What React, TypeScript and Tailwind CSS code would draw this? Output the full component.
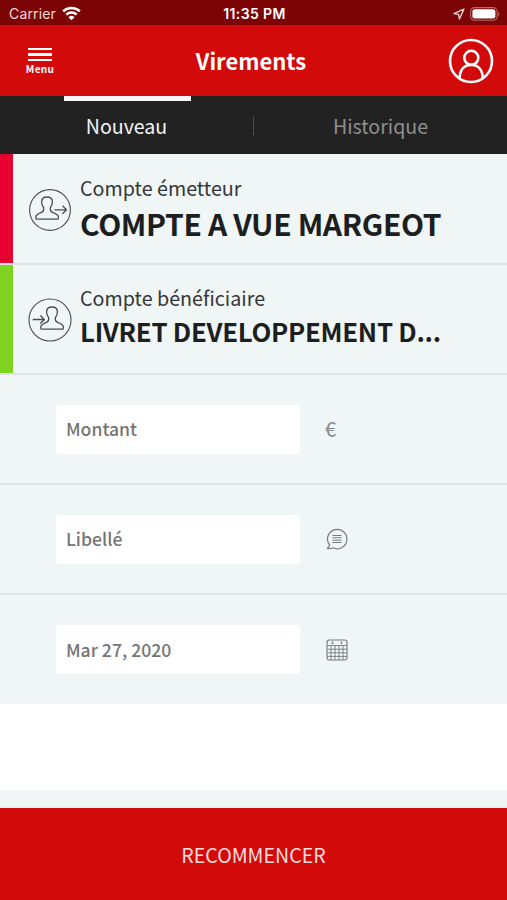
import type { ReactNode } from "react";

function WifiIcon() {
  return (
    <svg className="ml-[6px] h-[15px] w-[19px]" viewBox="0 0 19 15" fill="none" stroke="#fff" strokeWidth="2.5">
      <path d="M1.2 5.3a12 12 0 0 1 16.6 0" />
      <path d="M4.3 8.7a7.5 7.5 0 0 1 10.4 0" />
      <path d="M9.5 14.2 6.5 11.2a4.3 4.3 0 0 1 6 0Z" fill="#fff" stroke="none" />
    </svg>
  );
}

function LocationIcon() {
  return (
    <svg className="h-3 w-3" viewBox="0 0 12 12" fill="none" stroke="#f5dada" strokeWidth="1.3" strokeLinejoin="round">
      <path d="M11 1 1 5.6l4.6.8L6.4 11Z" />
    </svg>
  );
}

function BatteryIcon() {
  return (
    <svg className="ml-[5px] h-[14px] w-[30px]" viewBox="0 0 30 14">
      <rect x="0.6" y="0.6" width="26.6" height="12.6" rx="4" fill="none" stroke="#b86b6b" strokeWidth="1.1" />
      <rect x="2.4" y="2.3" width="23" height="9.2" rx="2.3" fill="#fff" />
      <path d="M28.3 4.7v4.6c1.4-.6 1.4-4 0-4.6Z" fill="#b86b6b" />
    </svg>
  );
}

function ProfileIcon() {
  return (
    <svg className="h-[46px] w-[46px]" viewBox="0 0 46 46" fill="none" stroke="#fff" strokeWidth="2.6">
      <circle cx="23" cy="23" r="21" />
      <circle cx="23.3" cy="19.8" r="7" />
      <path d="M11.6 40.4c.2-8.6 4.7-13.5 11.6-13.5s11.4 4.9 11.6 13.5" />
    </svg>
  );
}

const BUST =
  "M15.6 19.5c-1.2-1.6-2-3.6-2-5.6 0-2.9 2-4.9 5.4-4.9s5.4 2 5.4 4.9c0 2-.8 4-2 5.6-.5 2.8.2 4 2.2 4.8 4 1.5 5.8 2.4 5.8 4.7v1.2c0 .6-.3 1-1 1H8.8c-.7 0-1-.4-1-1V29c0-2.3 1.8-3.2 5.600-4.700 2-.8 2.700-2 2.200-4.800Z";

function AccountIcon({ incoming = false }: { incoming?: boolean }) {
  return (
    <svg className="h-[44px] w-[44px] shrink-0" viewBox="0 0 44 44" fill="none" stroke="#4a4d4d" strokeWidth="1.3" strokeLinejoin="round">
      <circle cx="22" cy="22" r={incoming ? 21 : 20.4} strokeWidth="1.1" />
      <path d={BUST} transform={incoming ? "translate(5 0)" : undefined} />
      <path d={incoming ? "M4.7 21.5h11.6M12.3 17.5l4 4-4 4" : "M26.5 21.8h12M34.5 17.8l4 4-4 4"} />
    </svg>
  );
}

function CommentIcon() {
  return (
    <svg className="h-[22px] w-[22px]" viewBox="0 0 22 22" fill="none" stroke="#777b7b" strokeWidth="1.2">
      <path d="M3.7 17.2A9.7 9.7 0 1 1 7 19.8C5.4 20.5 3.5 20.9 1.5 20.6 1.2 19.2 3.6 18.8 3.7 17.2Z" />
      <path d="M6.500 7.500h9M6.500 9.800h9M6.500 12.200h9M6.500 14.500h9" strokeWidth="1.1" />
    </svg>
  );
}

function CalendarIcon() {
  return (
    <svg className="h-[22px] w-[22px]" viewBox="0 0 22 22" fill="none" stroke="#777b7b" strokeWidth="0.9">
      <rect x="1" y="1" width="20" height="20" rx="2.5" strokeWidth="1.1" />
      <path d="M1 6.500h20M1 10.200h20M1 13.800h20M1 17.400h20M5 6.500V21M9 6.500V21M13 6.500V21M17 6.500V21" />
      <path d="M6.500 2.500v2.600M15.500 2.500v2.600" strokeWidth="1.5" />
    </svg>
  );
}

function Field({ label, icon }: { label: string; icon: ReactNode }) {
  return (
    <div className="flex h-[110px] shrink-0 items-center border-b-2 border-[#dfe3e4] pl-14 last-of-type:h-[109px] last-of-type:border-b-0">
      <div className="flex h-[49px] w-[244px] items-center rounded-[4px] bg-white pl-[10px] text-[17.6px] leading-none font-medium text-[#757575]">
        {label}
      </div>
      <div className="ml-[26px] text-[#858888]">{icon}</div>
    </div>
  );
}

export default function App() {
  return (
    <div className="flex h-[900px] w-[507px] flex-col overflow-hidden bg-[#f0f5f6] font-['Noto_Sans_CJK_SC',sans-serif] whitespace-nowrap text-[#1d1e1e]">
      {/* Status bar */}
      <div className="grid h-[25px] shrink-0 grid-cols-3 items-center bg-[#7c0404] pt-[2px] pr-[7px] pl-[9px] font-['Inter',sans-serif] text-white">
        <div className="flex items-center text-[14px] leading-none tracking-[0.15px] text-[#f2dada]">
          Carrier
          <WifiIcon />
        </div>
        <div className="pt-px text-center text-[14px] leading-none font-semibold tracking-[0.4px]">11:35 PM</div>
        <div className="flex items-center justify-end">
          <LocationIcon />
          <BatteryIcon />
        </div>
      </div>

      {/* Header */}
      <header className="grid h-[71px] shrink-0 grid-cols-[1fr_auto_1fr] items-center bg-[#d20a0a] pr-[13px] pl-[8px] text-white">
        <div className="ml-[18px] flex w-7 flex-col items-center pt-[2px]">
          <div className="flex w-6 flex-col gap-[3px]">
            <span className="h-[2.5px] bg-white" />
            <span className="h-[2.5px] bg-white" />
            <span className="h-[2.5px] bg-white" />
          </div>
          <span className="mt-[2px] text-[10px] leading-[12px] font-bold tracking-[0.3px]">Menu</span>
        </div>
        <h1 className="pb-[2px] text-[22px] leading-none font-bold">Virements</h1>
        <div className="flex justify-end">
          <ProfileIcon />
        </div>
      </header>

      {/* Tabs */}
      <nav className="relative flex h-[58px] shrink-0 items-center bg-[#222] pt-[2px] text-[19.6px] leading-none">
        <span className="absolute top-0 left-16 h-[5px] w-[127px] bg-[#f5f5f5]" />
        <div className="w-[253px] text-center text-[#f2f2f2]">Nouveau</div>
        <div className="h-[18px] w-px bg-[#4c4c4c]" />
        <div className="flex-1 text-center text-[#8f8f8f]">Historique</div>
      </nav>

      {/* Accounts */}
      <div className="flex h-[111px] shrink-0 items-center border-b-2 border-[#dfe3e4]">
        <div className="h-full w-[13px] bg-[#e5002f]" />
        <div className="ml-[15px] pt-[2px]"><AccountIcon /></div>
        <div className="ml-2 flex flex-col pb-[3px]">
          <span className="text-[19.7px] leading-[32px] text-[#343737]">Compte émetteur</span>
          <span className="text-[30px] leading-[38px] font-bold tracking-[-0.38px]">COMPTE A VUE MARGEOT</span>
        </div>
      </div>
      <div className="flex h-[110px] shrink-0 items-center border-b-2 border-[#dfe3e4]">
        <div className="h-full w-[13px] bg-[#7ed321]" />
        <div className="ml-[15px] pt-[2px]"><AccountIcon incoming /></div>
        <div className="ml-2 flex flex-col pb-[8px]">
          <span className="text-[19.7px] leading-[32px] text-[#343737]">Compte bénéficiaire</span>
          <span className="text-[25.8px] leading-[34px] font-bold tracking-[-0.28px]">LIVRET DEVELOPPEMENT D...</span>
        </div>
      </div>

      {/* Transfer form */}
      <section className="shrink-0">
        <Field label="Montant" icon={<span className="block -translate-x-[1px] text-[20px] leading-none">€</span>} />
        <Field label="Libellé" icon={<CommentIcon />} />
        <Field label="Mar 27, 2020" icon={<CalendarIcon />} />
      </section>

      <div className="h-[86px] shrink-0 bg-white" />
      <div className="h-[18px] shrink-0" />
      <button className="flex-1 bg-[#d20a0a] pt-[2px] text-[19.6px] leading-none text-[#ffdede]">RECOMMENCER</button>
    </div>
  );
}
